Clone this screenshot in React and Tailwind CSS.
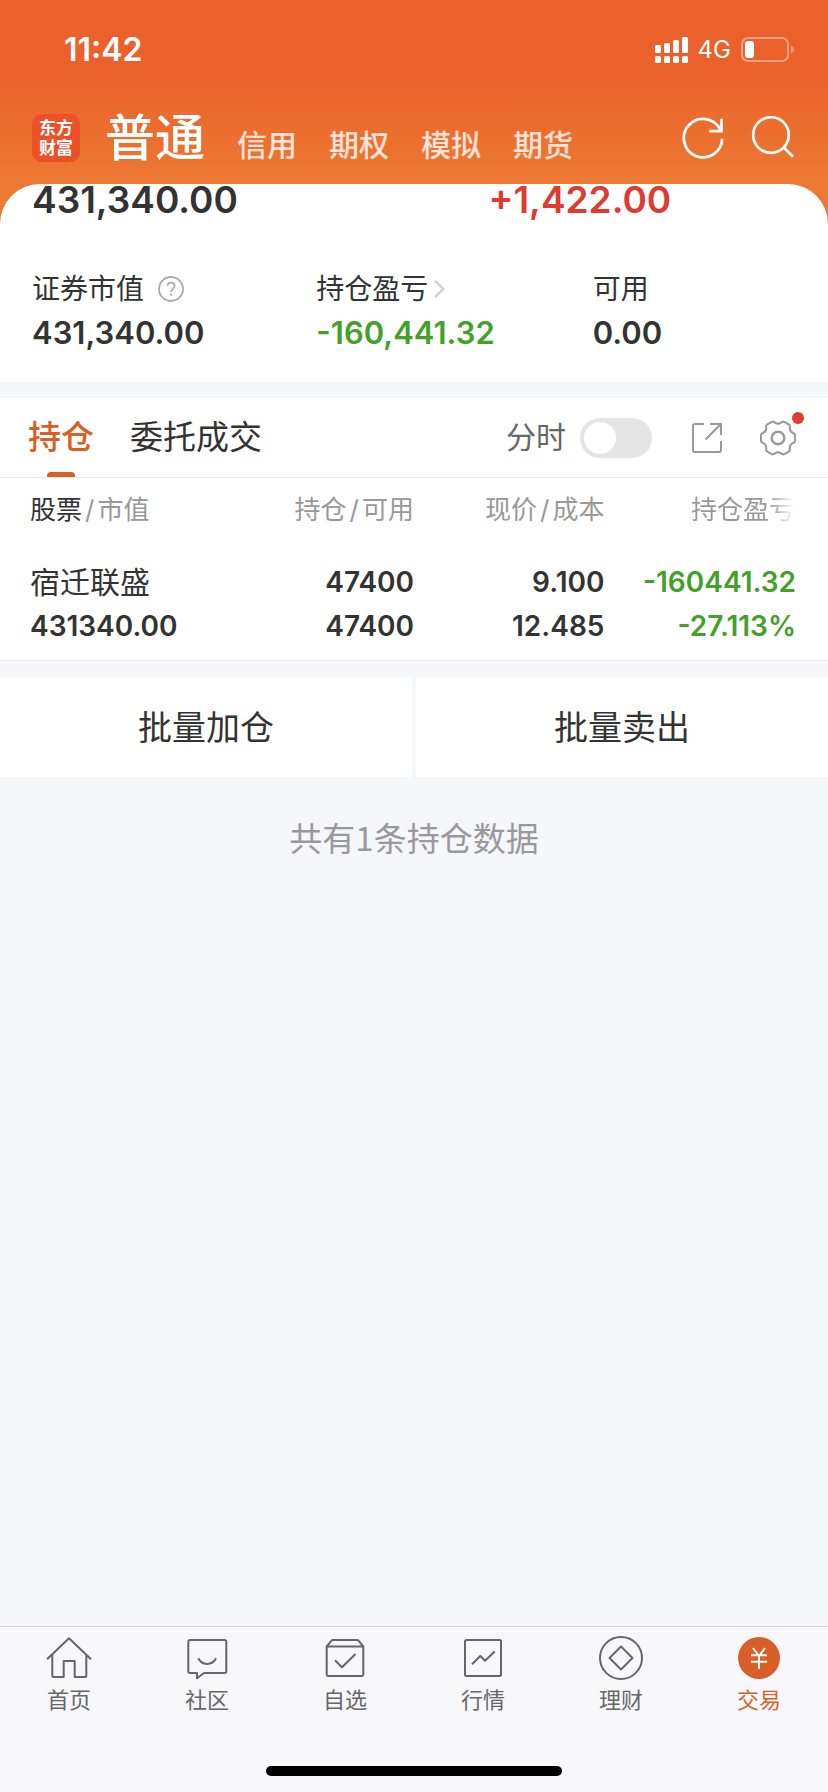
const accountTabs = ["信用", "期权", "模拟", "期货"];

const positions = [
    {
        name: "宿迁联盛",
        marketValue: "431340.00",
        held: "47400",
        available: "47400",
        price: "9.100",
        cost: "12.485",
        profit: "-160441.32",
        profitRate: "-27.113%",
    },
];

const navItems = [
    { label: "首页", Icon: HomeIcon },
    { label: "社区", Icon: CommunityIcon },
    { label: "自选", Icon: WatchlistIcon },
    { label: "行情", Icon: MarketIcon },
    { label: "理财", Icon: WealthIcon },
    { label: "交易", Icon: TradeIcon, active: true },
];

function NavSvg({ children }) {
    return (
        <svg
            width="46"
            height="46"
            viewBox="0 0 46 46"
            fill="none"
            stroke="currentColor"
            strokeWidth="2"
            strokeLinejoin="round"
            aria-hidden="true"
        >
            {children}
        </svg>
    );
}

function HomeIcon() {
    return (
        <NavSvg>
            <path d="M1 25.3 23 4.3 45 25.3" />
            <path d="M6.3 20.5V41.5a1.5 1.5 0 0 0 1.5 1.5H17.7V27H28.7V43H38.8a1.5 1.5 0 0 0 1.5-1.5V20.5" />
        </NavSvg>
    );
}

function CommunityIcon() {
    return (
        <NavSvg>
            <path d="M12.3 39H6a1.7 1.7 0 0 1-1.7-1.7V7.7A1.7 1.7 0 0 1 6 6H40.6a1.7 1.7 0 0 1 1.7 1.7V37.3A1.7 1.7 0 0 1 40.6 39H20L13 44.3V39Z" />
            <path d="M14.3 24.3C18 31.8 28.3 31.8 32 24.3" />
        </NavSvg>
    );
}

function WatchlistIcon() {
    return (
        <NavSvg>
            <path d="M4.7 12.5H41.3V40.3A1.7 1.7 0 0 1 39.6 42H6.4A1.7 1.7 0 0 1 4.7 40.3Z" />
            <path d="M4.7 12.5 9.5 6.7Q10 6 11 6H35Q36 6 36.5 6.7L41.3 12.5" />
            <path d="M13 26.3 20 33.3 33.5 20" />
        </NavSvg>
    );
}

function MarketIcon() {
    return (
        <NavSvg>
            <rect x="5" y="6" width="36" height="36" rx="1.5" />
            <path d="M12 30.3 20.3 22 25 26.7 34.7 17.5" />
        </NavSvg>
    );
}

function WealthIcon() {
    return (
        <NavSvg>
            <circle cx="23" cy="24" r="21" />
            <path d="M23 12.5 34.5 24 23 35.5 11.5 24Z" />
        </NavSvg>
    );
}

function TradeIcon() {
    return (
        <NavSvg>
            <circle cx="23" cy="24" r="21" fill="currentColor" stroke="none" />
            <path d="M17 14 23 22 29 14M23 22V35M15 21.3H31M15 27.7H31" stroke="#fff" />
        </NavSvg>
    );
}

function SignalIcon() {
    return (
        <svg width="33" height="26" viewBox="0 0 33 26" fill="#fff" aria-hidden="true">
            {[8, 6, 3, 0].map((top, i) => (
                <g key={top}>
                    <rect x={i * 9} y={top} width="6" height={16 - top} rx="1.5" />
                    <rect x={i * 9} y="19" width="6" height="7" rx="1.5" />
                </g>
            ))}
        </svg>
    );
}

function BatteryIcon() {
    return (
        <svg width="53" height="26" viewBox="0 0 53 26" aria-hidden="true">
            <g opacity="0.4">
                <rect x="1" y="1" width="46" height="23" rx="6" fill="none" stroke="#fff" strokeWidth="2" />
                <path d="M50 8.5Q53 10 53 12.5T50 16.5Z" fill="#fff" />
            </g>
            <rect x="4" y="4" width="9" height="17" rx="3" fill="#fff" />
        </svg>
    );
}

function RefreshIcon() {
    return (
        <svg width="44" height="44" viewBox="0 0 44 44" fill="none" stroke="#fff" strokeWidth="2.7" aria-hidden="true">
            <path d="M41.2 22.7A19.2 19.2 0 1 1 39.3 13.8" />
            <path d="M40.5 2.7V15.2H28.3" />
        </svg>
    );
}

function SearchIcon() {
    return (
        <svg width="44" height="44" viewBox="0 0 44 44" fill="none" stroke="#fff" strokeWidth="2.7" aria-hidden="true">
            <circle cx="20" cy="19" r="17.8" />
            <path d="M32.6 31.3 42 40.7" />
        </svg>
    );
}

function HelpIcon() {
    return (
        <svg width="26" height="26" viewBox="0 0 26 26" fill="none" stroke="#aaa" strokeWidth="1.8" aria-hidden="true">
            <circle cx="13" cy="13" r="12" />
            <path d="M9.5 9.8C9.5 5.5 16.6 5.5 16.6 9.9C16.6 12.6 13.1 12.7 13.1 16" />
            <circle cx="13.1" cy="18.7" r="1.1" fill="#aaa" stroke="none" />
        </svg>
    );
}

function ShareIcon() {
    return (
        <svg width="30" height="30" viewBox="0 0 30 30" fill="none" stroke="#999" strokeWidth="2" aria-hidden="true">
            <path d="M12 1H3Q1 1 1 3V27Q1 29 3 29H27Q29 29 29 27V18" />
            <path d="M18 1H29V12M29 1 13.5 16.5" />
        </svg>
    );
}

// six rounded teeth with a shallow dip between neighbours
function gearPath() {
    const at = (deg, r) => {
        const a = (deg * Math.PI) / 180;
        return `${(18 + r * Math.cos(a)).toFixed(2)} ${(18 + r * Math.sin(a)).toFixed(2)}`;
    };
    let d = `M${at(-11, 17.3)}`;
    for (let t = 0; t < 360; t += 60) {
        d += `Q${at(t, 17.2)} ${at(t + 11, 17.3)}`;
        d += `Q${at(t + 16, 17)} ${at(t + 19, 15.6)}`;
        d += `Q${at(t + 30, 13.3)} ${at(t + 41, 15.6)}`;
        d += `Q${at(t + 44, 17)} ${at(t + 49, 17.3)}`;
    }
    return d + "Z";
}

function GearIcon() {
    return (
        <svg width="36" height="36" viewBox="0 0 36 36" fill="none" stroke="#999" strokeWidth="2" aria-hidden="true">
            <path d={gearPath()} />
            <circle cx="18" cy="18" r="6.3" strokeWidth="2.4" />
        </svg>
    );
}

function StatusBar() {
    return (
        <div className="flex h-[100px] items-center justify-between pr-[34px] pl-16">
            <span className="text-[32px] leading-10 font-semibold">11:42</span>
            <div className="flex items-center gap-[10px]">
                <SignalIcon />
                <span className="text-2xl leading-8">4G</span>
                <BatteryIcon />
            </div>
        </div>
    );
}

function Header() {
    return (
        <header className="text-white">
            <StatusBar />
            <div className="flex h-[84px] items-start pr-[33px] pl-8">
                <div className="mt-[14px] flex size-12 flex-col items-center justify-center rounded-[10px] bg-[#ec5029] text-[17px] leading-5 font-bold">
                    <span>东方</span>
                    <span>财富</span>
                </div>
                <nav className="ml-[25px] flex items-baseline gap-8">
                    <button className="text-[50px] leading-[76px] font-medium">普通</button>
                    {accountTabs.map((tab) => (
                        <button key={tab} className="text-[30px] leading-10 font-medium text-white/80">
                            {tab}
                        </button>
                    ))}
                </nav>
                <div className="mt-4 ml-auto flex gap-[26px]">
                    <button aria-label="刷新">
                        <RefreshIcon />
                    </button>
                    <button aria-label="搜索">
                        <SearchIcon />
                    </button>
                </div>
            </div>
        </header>
    );
}

function Summary() {
    return (
        <section className="rounded-t-[40px] bg-white pb-[27px] pl-8 font-semibold">
            <div className="grid grid-cols-[456fr_339fr] text-[37px] leading-8">
                <span>431,340.00</span>
                <span className="text-[#de3b32]">+1,422.00</span>
            </div>
            <div className="mt-[55px] grid grid-cols-[284fr_276fr_235fr] text-[31px] leading-11">
                <div>
                    <div className="flex items-center gap-[14px] text-[28px] leading-9 font-normal">
                        证券市值
                        <button aria-label="说明">
                            <HelpIcon />
                        </button>
                    </div>
                    <p className="mt-1">431,340.00</p>
                </div>
                <div>
                    <a href="#profit" className="flex items-center gap-[6px] text-[28px] leading-9 font-normal">
                        持仓盈亏
                        <svg width="11" height="18" viewBox="0 0 11 18" fill="none" stroke="#ccc" strokeWidth="2" aria-hidden="true">
                            <path d="M1 1 9.5 9 1 17" />
                        </svg>
                    </a>
                    <p className="mt-1 text-[#43a02a]">-160,441.32</p>
                </div>
                <div>
                    <p className="text-[28px] leading-9 font-normal">可用</p>
                    <p className="mt-1">0.00</p>
                </div>
            </div>
        </section>
    );
}

function Toolbar() {
    return (
        <div className="flex h-20 items-center border-b border-[#e8e8ea] bg-white pr-8 pl-7 text-[33px]">
            <button className="relative h-full font-medium text-[#d85f27]">
                持仓
                <span className="absolute bottom-0 left-1/2 h-[5px] w-7 -translate-x-1/2 rounded-t-sm bg-[#d85f27]" />
            </button>
            <button className="ml-9">委托成交</button>
            <label className="ml-auto flex items-center gap-[14px] text-[30px] text-[#666]">
                分时
                <input
                    type="checkbox"
                    className="h-10 w-[72px] appearance-none rounded-full bg-[#e5e5e5] p-1 before:block before:size-8 before:rounded-full before:bg-white checked:bg-[#d85f27] checked:before:ml-8"
                />
            </label>
            <button className="ml-10" aria-label="分享">
                <ShareIcon />
            </button>
            <button className="relative ml-[38px]" aria-label="设置">
                <GearIcon />
                <span className="absolute -top-2 -right-2 size-3 rounded-full bg-[#de3b32]" />
            </button>
        </div>
    );
}

function Slash() {
    return <span className="mx-[3px]">/</span>;
}

function PositionTable() {
    return (
        <table className="w-full table-fixed border-b border-[#e8e8ea] bg-white text-right">
            <thead className="text-[26px] leading-9 text-[#999]">
                <tr className="h-16">
                    <th className="w-1/4 pl-[30px] text-left font-normal">
                        <span className="text-[#333]">股票</span>
                        <Slash />
                        市值
                    </th>
                    <th className="w-1/4 font-normal">
                        持仓
                        <Slash />
                        可用
                    </th>
                    <th className="w-[23%] font-normal">
                        现价
                        <Slash />
                        成本
                    </th>
                    <th className="pr-[33px] font-normal">
                        <span className="[mask-image:linear-gradient(to_right,black_75%,transparent)]">持仓盈亏</span>
                    </th>
                </tr>
            </thead>
            <tbody className="text-[28px] leading-11 font-semibold">
                {positions.map((p) => (
                    <tr key={p.name}>
                        <td className="pt-[18px] pb-3 pl-[30px] text-left">
                            <p className="text-[30px] font-normal">{p.name}</p>
                            <p>{p.marketValue}</p>
                        </td>
                        <td className="pt-[18px] pb-3">
                            <p>{p.held}</p>
                            <p>{p.available}</p>
                        </td>
                        <td className="pt-[18px] pb-3">
                            <p>{p.price}</p>
                            <p>{p.cost}</p>
                        </td>
                        <td className="pt-[18px] pr-8 pb-3 text-[#43a02a]">
                            <p>{p.profit}</p>
                            <p>{p.profitRate}</p>
                        </td>
                    </tr>
                ))}
            </tbody>
        </table>
    );
}

function BottomNav() {
    return (
        <nav className="mt-auto border-t border-[#d3d3dc] bg-[#f8f8fb] pt-[7px] pb-4">
            <div className="grid grid-cols-6">
                {navItems.map(({ label, Icon, active }) => (
                    <a
                        key={label}
                        href="#"
                        className={
                            active
                                ? "flex flex-col items-center gap-1 text-[22px] leading-8 text-[#d85f27]"
                                : "flex flex-col items-center gap-1 text-[22px] leading-8 text-[#666]"
                        }
                    >
                        <Icon />
                        {label}
                    </a>
                ))}
            </div>
            <div className="mx-auto mt-[50px] h-[10px] w-[296px] rounded-full bg-black" />
        </nav>
    );
}

export default function App() {
    return (
        <div className="flex min-h-screen flex-col bg-[#f6f7fa] font-['Inter','Noto_Sans_CJK_SC',sans-serif] text-[#333]">
            <div className="bg-linear-to-b from-[#eb612b] from-[70px] to-[#ec7a33] to-[190px]">
                <Header />
                <Summary />
            </div>
            <main className="mt-4">
                <Toolbar />
                <PositionTable />
                <div className="mt-4 grid grid-cols-2 gap-1 text-[34px]">
                    <button className="h-[100px] bg-white">批量加仓</button>
                    <button className="h-[100px] bg-white">批量卖出</button>
                </div>
                <p className="mt-9 text-center font-['Noto_Sans_CJK_SC',sans-serif] text-[33px] leading-12 text-[#999]">
                    共有1条持仓数据
                </p>
            </main>
            <BottomNav />
        </div>
    );
}
